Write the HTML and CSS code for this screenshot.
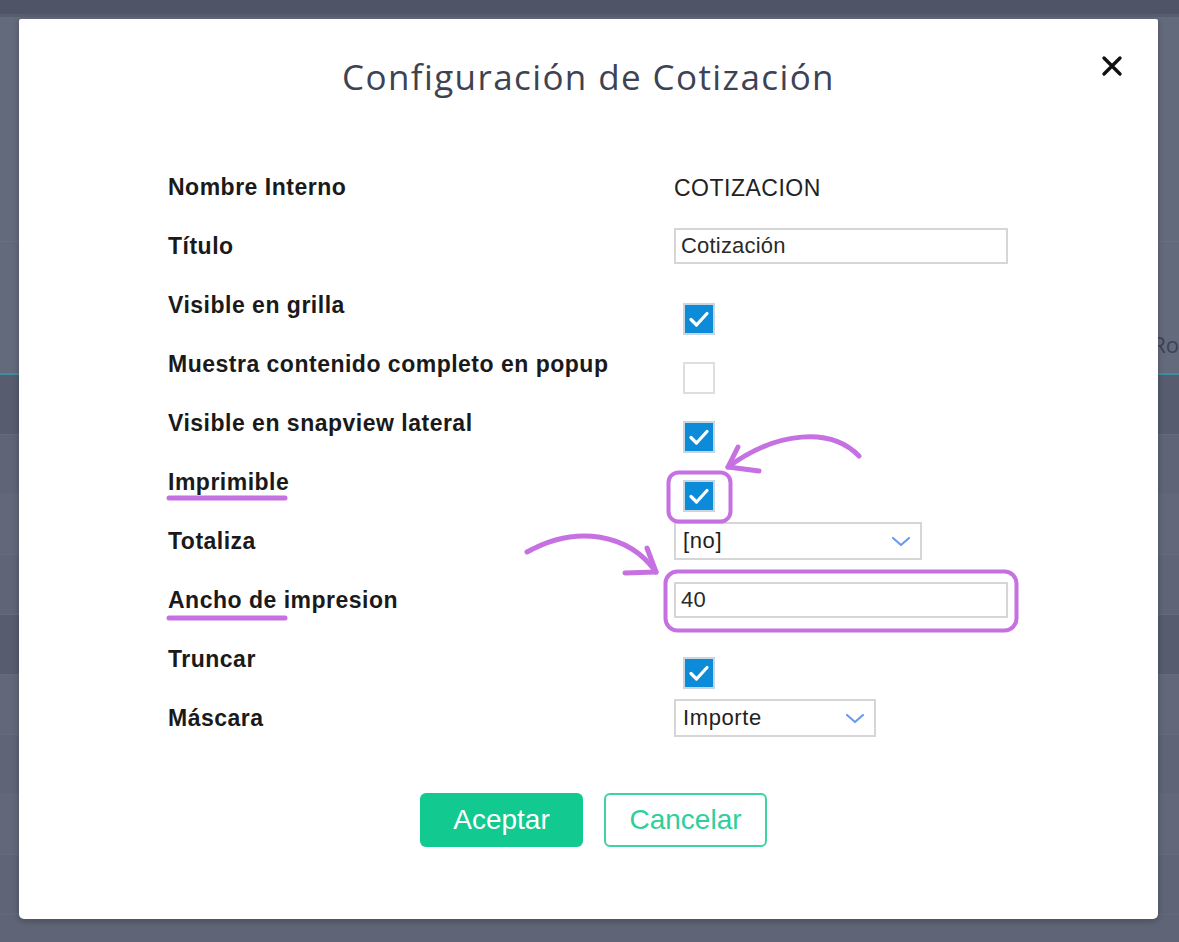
FILE: index.html
```html
<!DOCTYPE html>
<html lang="es">
<head>
    <meta charset="UTF-8">
    <meta name="viewport" content="width=device-width, initial-scale=1.0">
    <title>Configuración de Cotización</title>
    <link rel="stylesheet" href="styles.css">
</head>
<body>
    <div class="app">
        <div class="app-top"></div>
        <div class="app-band band-a"></div>
        <div class="app-band band-b"><span class="peek">Ro</span></div>
        <div class="app-row row-dark"></div>
        <div class="app-row"></div>
        <div class="app-row row-light"></div>
        <div class="app-row"></div>
        <div class="app-row row-dark"></div>
        <div class="app-row row-light"></div>
        <div class="app-row"></div>
        <div class="app-row row-light"></div>
        <div class="app-row"></div>
    </div>

    <div class="modal">
        <button class="close" type="button" aria-label="Cerrar">
            <svg width="22" height="22" viewBox="0 0 22 22"><path d="M3 3 L19 19 M19 3 L3 19" stroke="#111" stroke-width="3.4" stroke-linecap="round"/></svg>
        </button>

        <h1 class="modal-title">Configuración de Cotización</h1>

        <form class="config-form">
            <div class="field">
                <label>Nombre Interno</label>
                <span class="value">COTIZACION</span>
            </div>
            <div class="field">
                <label for="titulo">Título</label>
                <input class="text-input wide" id="titulo" type="text" value="Cotización">
            </div>
            <div class="field">
                <label>Visible en grilla</label>
                <span class="check on"></span>
            </div>
            <div class="field">
                <label>Muestra contenido completo en popup</label>
                <span class="check"></span>
            </div>
            <div class="field">
                <label>Visible en snapview lateral</label>
                <span class="check on"></span>
            </div>
            <div class="field">
                <label>Imprimible</label>
                <span class="check on"></span>
            </div>
            <div class="field">
                <label>Totaliza</label>
                <div class="select totaliza">[no]<span class="chevron"></span></div>
            </div>
            <div class="field">
                <label for="ancho">Ancho de impresion</label>
                <input class="text-input wide" id="ancho" type="text" value="40">
            </div>
            <div class="field">
                <label>Truncar</label>
                <span class="check on"></span>
            </div>
            <div class="field">
                <label>Máscara</label>
                <div class="select mascara">Importe<span class="chevron"></span></div>
            </div>

            <div class="actions">
                <button type="submit" class="btn btn-primary">Aceptar</button>
                <button type="button" class="btn btn-outline">Cancelar</button>
            </div>
        </form>

        <!-- hand drawn marks on top of the screenshot -->
        <svg class="marks" width="1139" height="900" viewBox="0 0 1139 900">
            <g fill="none" stroke="#c671e2" stroke-width="5" stroke-linecap="round" stroke-linejoin="round">
                <path d="M150 479 L266 479"/>
                <path d="M150 599 L266 599"/>
                <rect x="649.5" y="453.5" width="62" height="49" rx="10" stroke-width="4"/>
                <rect x="646.5" y="552.5" width="351" height="59" rx="12" stroke-width="4"/>
                <path d="M840 437 C 812 408, 758 412, 709 448"/>
                <path d="M709 448 L719 428 M709 448 L740 452"/>
                <path d="M508 533 C 558 505, 610 515, 637 553"/>
                <path d="M637 553 L606 554 M637 553 L628 529"/>
            </g>
        </svg>
    </div>
</body>
</html>
```

FILE: styles.css
```css
* {
    box-sizing: border-box;
}

body {
    margin: 0;
    height: 942px;
    overflow: hidden;
    font-family: 'Liberation Sans', Arial, sans-serif;
    background: #5f6577;
}

/* page behind the modal (already dimmed) */
.app {
    display: flex;
    flex-direction: column;
    height: 100%;
}

.app-top {
    height: 17px;
    background: #4f5567;
    border-bottom: 3px solid #585e70;
}

.app-band {
    background: #636a7c;
}

.band-a {
    height: 225px;
    border-bottom: 1px solid #6a7083;
}

.band-b {
    height: 133px;
    display: flex;
    align-items: flex-end;
    justify-content: flex-end;
    padding-bottom: 14px;
    border-bottom: 2px solid #3f8da2;
}

.peek {
    font-family: 'Open Sans', sans-serif;
    font-size: 22px;
    color: #3c4254;
}

.app-row {
    height: 60px;
    background: #5f6577;
    border-bottom: 1px solid #646a7c;
}

.row-dark {
    background: #575d6f;
}

.row-light {
    background: #626879;
}

/* modal */
.modal {
    position: absolute;
    top: 19px;
    left: 19px;
    width: 1139px;
    height: 900px;
    background: #ffffff;
    border-radius: 2px 2px 5px 5px;
    box-shadow: 0 2px 6px rgba(0, 0, 0, 0.25);
}

.close {
    position: absolute;
    top: 36px;
    right: 35px;
    padding: 0;
    border: none;
    background: none;
    cursor: pointer;
}

.modal-title {
    margin: 0;
    padding-top: 34px;
    height: 144px;
    text-align: center;
    font-family: 'Open Sans', sans-serif;
    font-weight: 400;
    font-size: 35px;
    letter-spacing: 1.4px;
    color: #3d4352;
}

.config-form {
    padding-left: 149px;
}

.field {
    display: grid;
    grid-template-columns: 506px auto;
    align-items: start;
    height: 59px;
}

.field label {
    padding-top: 12px;
    line-height: 24px;
    font-size: 23px;
    letter-spacing: 0.5px;
    font-weight: bold;
    color: #1a1a1a;
}

.value {
    padding-top: 13px;
    line-height: 24px;
    font-size: 23px;
    letter-spacing: 0.5px;
    color: #222222;
}

.text-input {
    margin-top: 6px;
    height: 36px;
    padding: 0 5px;
    border: 2px solid #d6d6d6;
    font-family: inherit;
    font-size: 22px;
    letter-spacing: 0.2px;
    color: #2a2a2a;
    outline: none;
}

.wide {
    width: 334px;
}

.check {
    display: block;
    margin-top: 22px;
    margin-left: 9px;
    width: 32px;
    height: 32px;
    border: 2px solid #dedede;
    background: #ffffff;
}

.check.on {
    border-color: #c9d6e0;
    background: #0c8bd9 url("data:image/svg+xml;utf8,<svg xmlns='http://www.w3.org/2000/svg' width='28' height='28' viewBox='0 0 28 28'><path d='M6 14.5 L11.5 20 L22 8.5' fill='none' stroke='white' stroke-width='3.2' stroke-linecap='round' stroke-linejoin='round'/></svg>") center no-repeat;
}

.select {
    position: relative;
    margin-top: 5px;
    height: 38px;
    padding: 0 7px;
    line-height: 34px;
    border: 2px solid #d6d6d6;
    font-size: 22px;
    letter-spacing: 0.6px;
    color: #222222;
}

.totaliza {
    width: 248px;
}

.mascara {
    width: 202px;
}

.chevron {
    position: absolute;
    right: 9px;
    top: 10px;
    width: 20px;
    height: 14px;
    background: url("data:image/svg+xml;utf8,<svg xmlns='http://www.w3.org/2000/svg' width='20' height='14' viewBox='0 0 20 14'><path d='M2 4 L10 11 L18 4' fill='none' stroke='%236b9bef' stroke-width='2.2' stroke-linecap='round' stroke-linejoin='round'/></svg>") center no-repeat;
}

.actions {
    display: flex;
    gap: 21px;
    justify-content: center;
    margin-top: 40px;
    padding-right: 139px;
}

.btn {
    width: 163px;
    height: 54px;
    border-radius: 6px;
    font-family: 'Liberation Sans', Arial, sans-serif;
    font-size: 28px;
    cursor: pointer;
}

.btn-primary {
    border: none;
    background: #12c98f;
    color: #ffffff;
}

.btn-outline {
    border: 2px solid #3dd3a4;
    background: #ffffff;
    color: #2fcf9b;
}

.marks {
    position: absolute;
    top: 0;
    left: 0;
    pointer-events: none;
}
```
